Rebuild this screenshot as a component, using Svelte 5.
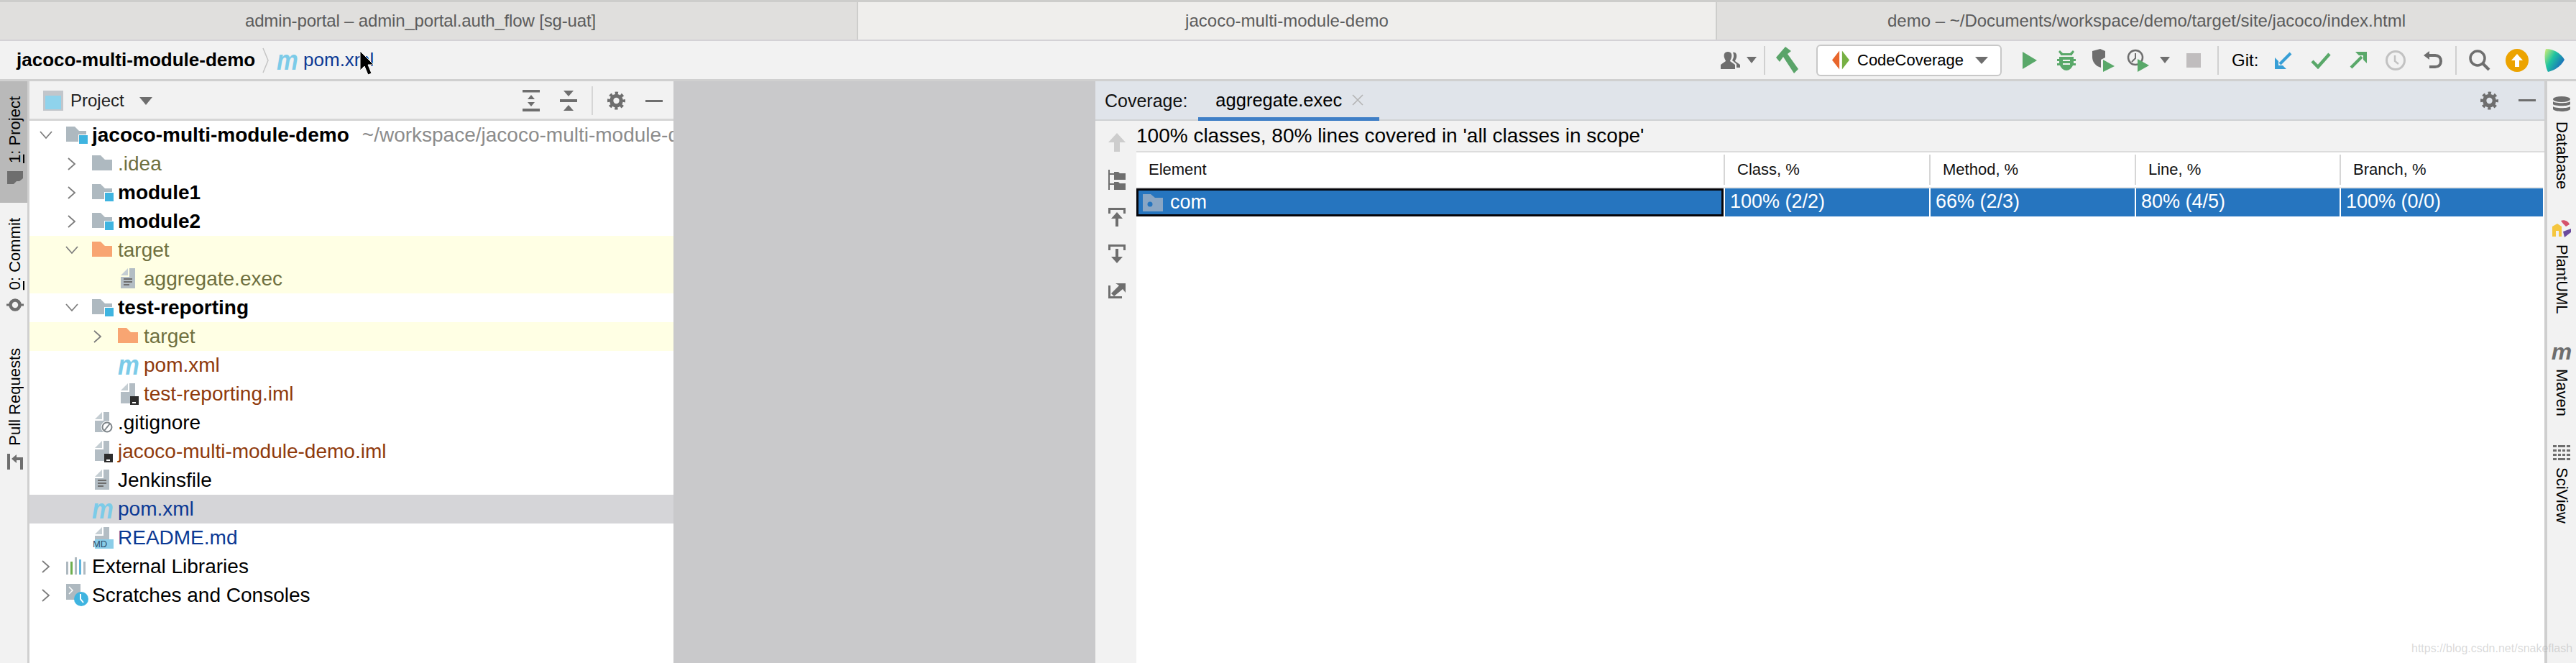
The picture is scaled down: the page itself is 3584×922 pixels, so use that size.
<script lang="ts">
/**
 * IDE window with project tree and coverage results.
 */

type Row = {
  depth: number;
  label: string;
  icon: string;
  arrow?: 'open' | 'closed';
  cls?: string;
  hint?: string;
  tint?: boolean;
  selected?: boolean;
};

const tabs = [
  { label: 'admin-portal – admin_portal.auth_flow [sg-uat]' },
  { label: 'jacoco-multi-module-demo', active: true },
  { label: 'demo – ~/Documents/workspace/demo/target/site/jacoco/index.html' }
];

const rows: Row[] = [
  { depth: 0, label: 'jacoco-multi-module-demo', icon: 'module', arrow: 'open', cls: 'bold', hint: '~/workspace/jacoco-multi-module-demo' },
  { depth: 1, label: '.idea', icon: 'folder', arrow: 'closed', cls: 'olive' },
  { depth: 1, label: 'module1', icon: 'module', arrow: 'closed', cls: 'bold' },
  { depth: 1, label: 'module2', icon: 'module', arrow: 'closed', cls: 'bold' },
  { depth: 1, label: 'target', icon: 'orange', arrow: 'open', cls: 'olive', tint: true },
  { depth: 2, label: 'aggregate.exec', icon: 'text', cls: 'olive', tint: true },
  { depth: 1, label: 'test-reporting', icon: 'module', arrow: 'open', cls: 'bold' },
  { depth: 2, label: 'target', icon: 'orange', arrow: 'closed', cls: 'olive', tint: true },
  { depth: 2, label: 'pom.xml', icon: 'maven', cls: 'rust' },
  { depth: 2, label: 'test-reporting.iml', icon: 'iml', cls: 'rust' },
  { depth: 1, label: '.gitignore', icon: 'ignore' },
  { depth: 1, label: 'jacoco-multi-module-demo.iml', icon: 'iml', cls: 'rust' },
  { depth: 1, label: 'Jenkinsfile', icon: 'text' },
  { depth: 1, label: 'pom.xml', icon: 'maven', cls: 'blue', selected: true },
  { depth: 1, label: 'README.md', icon: 'md', cls: 'blue' },
  { depth: 0, label: 'External Libraries', icon: 'libs', arrow: 'closed' },
  { depth: 0, label: 'Scratches and Consoles', icon: 'scratch', arrow: 'closed' }
];

const columns = ['Element', 'Class, %', 'Method, %', 'Line, %', 'Branch, %'];
const values = ['100% (2/2)', '66% (2/3)', '80% (4/5)', '100% (0/0)'];
</script>

{#snippet gear()}
  <svg class="gear" viewBox="0 0 24 24" width="25" height="26">
    <circle cx="12" cy="12" r="6.5" fill="none" stroke="#6e6e6e" stroke-width="5" />
    <circle cx="12" cy="12" r="10" fill="none" stroke="#6e6e6e" stroke-width="4" stroke-dasharray="4 3.85" stroke-dashoffset="2" />
  </svg>
{/snippet}

{#snippet treeIcon(kind: string)}
  {#if kind === 'module' || kind === 'folder' || kind === 'orange'}
    <svg viewBox="0 0 32 26" width="32" height="26" class="ic-folder">
      <path d="M0 1H12L18 7H28V22H0Z" fill={kind === 'orange' ? '#f8a572' : '#aeb9c0'} />
      {#if kind === 'module'}
        <rect x="17" y="12" width="14" height="14" fill="#fff" />
        <rect x="18" y="13" width="12" height="12" fill="#3fb4e0" />
      {/if}
    </svg>
  {:else if kind === 'maven'}
    <span class="m-icon">m</span>
  {:else if kind === 'libs'}
    <svg viewBox="0 0 30 26" width="30" height="26" class="ic-folder">
      <rect x="0" y="6" width="3" height="18" fill="#aeb9c0" />
      <rect x="6" y="6" width="3" height="18" fill="#6cae4f" />
      <rect x="12" y="0" width="3" height="24" fill="#aeb9c0" />
      <rect x="18" y="3" width="3" height="21" fill="#62b5dc" />
      <rect x="24" y="6" width="3" height="18" fill="#aeb9c0" />
    </svg>
  {:else if kind === 'scratch'}
    <svg viewBox="0 0 32 32" width="32" height="32" class="ic-folder">
      <path d="M0 0H20V12L12 22H0Z" fill="#aeb9c0" />
      <path d="M4 4L9 9L4 14" fill="none" stroke="#fff" stroke-width="1.5" />
      <circle cx="21" cy="21" r="10" fill="#3fb4e0" />
      <path d="M20 14V21L24 26" fill="none" stroke="#fff" stroke-width="2" />
    </svg>
  {:else}
    <svg viewBox="0 0 26 30" width="26" height="30" class="ic-file">
      <path d="M12 0H20V28H0V12H12Z" fill="#b3bdc4" />
      <path d="M0 10L10 0V10Z" fill="#c5ced3" />
      {#if kind === 'text'}
        <path d="M4 15H16M4 19H16M4 23H12" stroke="#6e6e6e" stroke-width="2" />
      {:else if kind === 'iml'}
        <rect x="13" y="18" width="12" height="12" fill="#2d2d2d" />
        <rect x="16" y="26" width="5" height="2" fill="#fff" />
      {:else if kind === 'ignore'}
        <circle cx="17" cy="21" r="8.5" fill="#fff" />
        <circle cx="17" cy="21" r="6.5" fill="none" stroke="#7d8489" stroke-width="2" />
        <path d="M13 26L21 16" stroke="#7d8489" stroke-width="2" />
      {:else if kind === 'md'}
        <rect x="-4" y="17" width="30" height="13" fill="#8bcde8" />
      {/if}
    </svg>
    {#if kind === 'md'}<span class="md-tag">MD</span>{/if}
  {/if}
{/snippet}

<div class="window">
  <div class="tabs">
    {#each tabs as tab}
      <div class="tab" class:active={tab.active}>{tab.label}</div>
    {/each}
  </div>

  <div class="navbar">
    <span class="crumb-root">jacoco-multi-module-demo</span>
    <svg class="crumb-sep" viewBox="0 0 10 36" width="10" height="36"><path d="M1 1L8 18L1 35" fill="none" stroke="#c4c4c4" stroke-width="1.5" /></svg>
    <span class="m-icon crumb-m">m</span>
    <span class="crumb-file">pom.xml</span>

    <div class="toolbar">
      <span class="slot w-person">
        <svg viewBox="0 0 28 24" width="28" height="24"><path d="M10 0C15 0 16 4 15 8C14 11 13 12 13 13L20 18V24H0V18L7 13C7 12 6 11 5 8C4 4 5 0 10 0Z" fill="#6e6e6e" /><path d="M17 1C21 0 23 4 22 8C21.500 10 20 12 20 13L27 18V22H22V17L16 12C18 9 19 5 17 1Z" fill="#6e6e6e" /></svg>
      </span>
      <span class="slot w-tri first-tri"><i class="tri"></i></span>
      <i class="sep sep-a"></i>
      <span class="slot w-hammer">
        <svg viewBox="0 0 32 38" width="32" height="38"><path d="M0 15L13 0L21 6L16 10L31 31L25 37L10 14L5 21Z" fill="#5aa469" /></svg>
      </span>
      <div class="combo">
        <svg viewBox="0 0 26 28" width="24" height="27"><path d="M11 0V28L0 14Z" fill="#e8662c" /><path d="M15 0V28L26 14Z" fill="#76b043" /></svg>
        <span class="combo-label">CodeCoverage</span>
        <i class="tri big"></i>
      </div>
      <span class="slot w-run">
        <svg viewBox="0 0 20 24" width="20" height="24"><path d="M0 0L20 12L0 24Z" fill="#59a869" /></svg>
      </span>
      <span class="slot w-52">
        <svg viewBox="0 0 26 28" width="26" height="28"><path d="M4 0L8 4H18L22 0L24 2L21 6V7H5V6L2 2ZM3 9H23V12H26V15H23V18H26V21H22C20 25 17 28 13 28C9 28 6 25 4 21H0V18H3V15H0V12H3ZM8 13V15H18V13ZM8 18V20H18V18Z" fill="#59a869" /></svg>
      </span>
      <span class="slot w-52">
        <svg viewBox="0 0 32 32" width="32" height="32"><path d="M0 3L11 0L18 3V12L12 15V26L7 24C2 20 0 16 0 11Z" fill="#6e6e6e" /><path d="M15 15L31 24L15 32Z" fill="#59a869" /></svg>
      </span>
      <span class="slot w-clock">
        <svg viewBox="0 0 32 32" width="32" height="32"><circle cx="12" cy="12" r="10" fill="none" stroke="#6e6e6e" stroke-width="2.500" /><path d="M12 6V13L7 18" fill="none" stroke="#6e6e6e" stroke-width="2" /><path d="M15 14L31 23L15 32Z" fill="#59a869" /></svg>
      </span>
      <span class="slot w-tri"><i class="tri"></i></span>
      <span class="slot w-stop"><i class="stop"></i></span>
      <i class="sep sep-b"></i>
      <span class="git">Git:</span>
      <span class="slot w-52">
        <svg viewBox="0 0 24 24" width="24" height="24"><path d="M22 2L7 17" stroke="#389fd6" stroke-width="4" /><path d="M0 8L0 24H16L11 19H5V13Z" fill="#389fd6" /></svg>
      </span>
      <span class="slot w-52">
        <svg viewBox="0 0 28 24" width="28" height="24"><path d="M2 13L10 21L26 3" fill="none" stroke="#59a869" stroke-width="4.500" /></svg>
      </span>
      <span class="slot w-52">
        <svg viewBox="0 0 24 24" width="24" height="24"><path d="M2 22L17 7" stroke="#59a869" stroke-width="4" /><path d="M8 0H24V16L19 11V5H13Z" fill="#59a869" /></svg>
      </span>
      <span class="slot w-52">
        <svg viewBox="0 0 28 28" width="28" height="28"><circle cx="14" cy="14" r="12.500" fill="none" stroke="#c2c2c2" stroke-width="3" /><path d="M13 7V15L18 19" fill="none" stroke="#c2c2c2" stroke-width="2.500" /></svg>
      </span>
      <span class="slot w-52">
        <svg viewBox="0 0 26 26" width="26" height="26"><path d="M7 6H16C21 6 24 9 24 14C24 19 21 22 16 22H8" fill="none" stroke="#6e6e6e" stroke-width="4" /><path d="M0 6L8 0V12Z" fill="#6e6e6e" /></svg>
      </span>
      <i class="sep sep-c"></i>
      <span class="slot w-52">
        <svg viewBox="0 0 30 30" width="30" height="30"><circle cx="12" cy="12" r="10" fill="none" stroke="#6e6e6e" stroke-width="3.500" /><path d="M19 19L28 28" stroke="#6e6e6e" stroke-width="4" /></svg>
      </span>
      <span class="slot w-52">
        <svg viewBox="0 0 32 32" width="32" height="32"><circle cx="16" cy="16" r="16" fill="#eca300" /><path d="M16 7L24 16H19V25H13V16H8Z" fill="#fff" /></svg>
      </span>
      <span class="slot w-52">
        <svg viewBox="0 0 30 32" width="30" height="32">
          <defs><linearGradient id="toolbox" x1="0" y1="0" x2="1" y2="0.700"><stop offset="0" stop-color="#d8ee74" /><stop offset="0.450" stop-color="#1fc3a0" /><stop offset="1" stop-color="#1a5fc0" /></linearGradient></defs>
          <path d="M3 0C14 0 24 6 29 15C25 23 16 30 6 32C2 25 0 8 3 0Z" fill="url(#toolbox)" />
        </svg>
      </span>
    </div>
  </div>

  <div class="body">
    <div class="strip left">
      <div class="strip-btn active">
        <span class="strip-label"><u>1</u>: Project</span>
        <svg viewBox="0 0 22 18" width="22" height="18"><path d="M0 18V0H22V10L17 14H13L9 18Z" fill="#6e6e6e" /></svg>
      </div>
      <div class="strip-btn commit">
        <span class="strip-label"><u>0</u>: Commit</span>
        <svg viewBox="0 0 24 24" width="24" height="24"><circle cx="12" cy="12" r="6.500" fill="none" stroke="#6e6e6e" stroke-width="4.500" /><path d="M0 12H6M18 12H24" stroke="#6e6e6e" stroke-width="3" /></svg>
      </div>
      <div class="strip-btn pull">
        <span class="strip-label">Pull Requests</span>
        <svg viewBox="0 0 22 22" width="22" height="22"><path d="M0 0H4V22H0ZM6 7L13 1V5H22V22H18V9H13V13Z" fill="#6e6e6e" /></svg>
      </div>
    </div>

    <section class="project">
      <header class="project-head">
        <svg viewBox="0 0 28 28" width="28" height="28" class="pane-ic"><rect width="28" height="28" fill="#c2c6cb" /><rect x="3" y="7" width="22" height="19" fill="#8fd3ec" /></svg>
        <span class="project-title">Project</span>
        <i class="tri head-tri"></i>
        <span class="head-tools">
          <svg viewBox="0 0 24 30" width="24" height="30"><path d="M0 0H24V3.500H0ZM0 26H24V30H0ZM12 7L17 13H7ZM7 17H17L12 23Z" fill="#6e6e6e" /></svg>
          <svg viewBox="0 0 24 30" width="24" height="30" class="collapse"><path d="M0 13H24V17H0ZM5 1H19L12 9ZM12 21L19 29H5Z" fill="#6e6e6e" /></svg>
          <i class="head-sep"></i>
          {@render gear()}
          <i class="minus"></i>
        </span>
      </header>
      <div class="tree">
        {#each rows as row}
          <div class="row" class:tint={row.tint} class:selected={row.selected} style={`padding-left:${row.depth * 36}px`}>
            <span class="arrow">
              {#if row.arrow === 'open'}
                <svg viewBox="0 0 18 12" width="18" height="12"><path d="M1 1L9 10L17 1" fill="none" stroke="#7d7d7d" stroke-width="1.800" /></svg>
              {:else if row.arrow === 'closed'}
                <svg viewBox="0 0 12 18" width="12" height="18"><path d="M1 1L10 9L1 17" fill="none" stroke="#7d7d7d" stroke-width="1.800" /></svg>
              {/if}
            </span>
            <span class="icon">{@render treeIcon(row.icon)}</span>
            <span class={`name ${row.cls ?? ''}`}>{row.label}</span>
            {#if row.hint}<span class="hint">{row.hint}</span>{/if}
          </div>
        {/each}
      </div>
    </section>

    <div class="editor"></div>

    <section class="coverage">
      <header class="cov-head">
        <span class="cov-title">Coverage:</span>
        <div class="cov-tab">
          <span>aggregate.exec</span>
          <svg viewBox="0 0 16 16" width="16" height="16"><path d="M1 1L15 15M15 1L1 15" stroke="#b4b4b4" stroke-width="1.600" /></svg>
        </div>
        <span class="cov-tools">
          {@render gear()}
          <i class="minus"></i>
        </span>
      </header>
      <div class="cov-body">
        <div class="gutter">
          <svg viewBox="0 0 24 26" width="24" height="26"><path d="M12 0L24 13H16V26H8V13H0Z" fill="#cdcdcd" /></svg>
          <svg viewBox="0 0 24 28" width="24" height="28"><path d="M0 0H2V28H0ZM2 5H8V3H14L16 5H24V14H8V7H2ZM2 19H8V17H14L16 19H24V28H8V21H2Z" fill="#6e6e6e" /></svg>
          <svg viewBox="0 0 24 26" width="24" height="26"><path d="M0 0H24V8H21V3H3V8H0ZM12 6L20 15H14V26H10V15H4Z" fill="#6e6e6e" /></svg>
          <svg viewBox="0 0 24 26" width="24" height="26"><path d="M0 0H24V8H21V3H3V8H0ZM10 6H14V17H20L12 26L4 17H10Z" fill="#6e6e6e" /></svg>
          <svg viewBox="0 0 24 24" width="24" height="24"><path d="M0 6H3V21H19V24H0ZM4 17L15 6L10 3H24V16L20 11L8 21Z" fill="#6e6e6e" /></svg>
        </div>
        <div class="results">
          <div class="summary">100% classes, 80% lines covered in 'all classes in scope'</div>
          <div class="table">
            <div class="tr head">
              {#each columns as col}
                <div class="th">{col}</div>
              {/each}
            </div>
            <div class="tr pick">
              <div class="td first">
                <svg viewBox="0 0 28 24" width="28" height="24"><path d="M0 0H11L17 5H28V24H0Z" fill="#8aa6c4" /><circle cx="10" cy="14" r="3.500" fill="#2675bf" /></svg>
                <span>com</span>
              </div>
              {#each values as value}
                <div class="td">{value}</div>
              {/each}
            </div>
          </div>
        </div>
      </div>
    </section>

    <div class="strip right">
      <div class="side-btn db">
        <svg viewBox="0 0 24 24" width="24" height="24"><ellipse cx="12" cy="4" rx="12" ry="4" fill="#6e6e6e" /><path d="M0 7C3 10 21 10 24 7V11C21 14 3 14 0 11ZM0 14C3 17 21 17 24 14V18C21 22 3 22 0 18Z" fill="#6e6e6e" /></svg>
        <span>Database</span>
      </div>
      <div class="side-btn uml">
        <svg viewBox="0 0 26 26" width="26" height="26"><path d="M0 10L7 6L13 10V24H9V16H5V24H0Z" fill="#f5c63f" /><path d="M12 2C16 0 22 2 24 7L19 10L15 6Z" fill="#d5526b" /><path d="M15 17L26 13V18L17 25Z" fill="#6b4a9e" /></svg>
        <span>PlantUML</span>
      </div>
      <div class="side-btn mvn">
        <span class="m-icon gray">m</span>
        <span>Maven</span>
      </div>
      <div class="side-btn sci">
        <svg viewBox="0 0 24 22" width="24" height="22"><path d="M0 0H5V3H0ZM7 0H17V3H7ZM19 0H24V3H19ZM0 6H5V9H0ZM7 6H11V9H7ZM13 6H17V9H13ZM19 6H24V9H19ZM0 12H5V15H0ZM7 12H11V15H7ZM13 12H17V15H13ZM19 12H24V15H19ZM0 18H5V21H0ZM7 18H17V21H7ZM19 18H24V21H19Z" fill="#6e6e6e" /></svg>
        <span>SciView</span>
      </div>
    </div>
  </div>

  <svg class="cursor" viewBox="0 0 20 36" width="20" height="36"><path d="M1 1V28L7 22L12 34L17 32L12 20H20Z" fill="#000" stroke="#fff" stroke-width="1" /></svg>
  <div class="watermark">https://blog.csdn.net/snakeflash</div>
</div>

<style>
  :global(body) {
    margin: 0;
    background: #fff;
  }

  .window {
    position: relative;
    display: flex;
    flex-direction: column;
    height: 922px;
    overflow: hidden;
    font-family: 'Liberation Sans', Arial, sans-serif;
    color: #000;
  }

  .tabs {
    display: grid;
    grid-template-columns: 1194px 1195px 1fr;
    height: 57px;
    flex: none;
    box-sizing: border-box;
    border-top: 3px solid #cdcdcb;
    border-bottom: 2px solid #d4d2d6;
    background: #e0dfdd;
  }

  .tab {
    display: flex;
    align-items: center;
    justify-content: center;
    box-sizing: border-box;
    border-right: 2px solid #cdcdcb;
    font-size: 24px;
    color: #5c5c5c;
  }

  .tab:first-child {
    padding-right: 22px;
    letter-spacing: -0.15px;
  }

  .tab:last-child {
    border-right: 0;
  }

  .tab.active {
    background: #efeeec;
  }

  .navbar {
    display: flex;
    align-items: center;
    flex: none;
    height: 56px;
    box-sizing: border-box;
    padding-left: 23px;
    border-bottom: 3px solid #d0d0d0;
    background: #f2f2f2;
  }

  .crumb-root {
    font-size: 26px;
    font-weight: 700;
  }

  .crumb-sep {
    margin: 0 10px;
  }

  .m-icon {
    display: inline-block;
    font-size: 38px;
    line-height: 30px;
    font-weight: 700;
    font-style: italic;
    color: #7ccbe8;
    transform: scaleX(0.88);
    transform-origin: left center;
  }

  .m-icon.gray {
    color: #6e6e6e;
    font-size: 32px;
    line-height: 22px;
    margin-right: 0;
    transform: none;
  }

  .crumb-m {
    margin-right: -4px;
  }

  .crumb-file {
    margin-left: 7px;
    font-size: 26px;
    color: #0b3994;
  }

  .toolbar {
    display: flex;
    align-items: center;
    margin-left: auto;
    padding-right: 4px;
  }

  .slot {
    display: flex;
    align-items: center;
    justify-content: center;
    flex: none;
  }

  .w-person { width: 40px; }
  .w-tri { width: 30px; }
  .first-tri { width: 18px; }
  .w-hammer { width: 44px; }
  .w-run { width: 50px; margin-left: 14px; }
  .w-52 { width: 52px; }
  .w-clock { width: 44px; }
  .w-stop { width: 50px; }

  .tri {
    display: block;
    width: 0;
    height: 0;
    border-left: 7.5px solid transparent;
    border-right: 7.5px solid transparent;
    border-top: 9px solid #6e6e6e;
  }

  .tri.big {
    border-left-width: 9px;
    border-right-width: 9px;
    border-top-width: 10px;
  }

  .sep {
    display: block;
    flex: none;
    width: 2px;
    height: 40px;
    background: #d0d0d0;
  }

  .sep-a { margin: 0 9px 0 8px; }
  .sep-b { margin: 0 18px 0 8px; }
  .sep-c { margin: 0 6px 0 5px; }

  .stop {
    display: block;
    width: 20px;
    height: 20px;
    background: #c0bdbe;
  }

  .combo {
    display: flex;
    align-items: center;
    flex: none;
    width: 258px;
    height: 44px;
    margin-left: 18px;
    box-sizing: border-box;
    padding: 0 17px 0 20px;
    border: 2px solid #c8c8c8;
    border-radius: 6px;
    background: #fff;
  }

  .combo-label {
    margin-left: 11px;
    font-size: 22px;
  }

  .combo .tri {
    margin-left: auto;
  }

  .git {
    width: 46px;
    flex: none;
    font-size: 24px;
  }

  .body {
    display: flex;
    flex: 1;
    min-height: 0;
  }

  .strip {
    display: flex;
    flex-direction: column;
    flex: none;
    background: #f2f2f2;
  }

  .strip.left {
    width: 38px;
    border-right: 3px solid #d0d0d0;
  }

  .strip-btn {
    display: flex;
    flex-direction: column;
    align-items: center;
    padding-left: 3px;
    font-size: 22px;
    white-space: nowrap;
  }

  .strip-label {
    writing-mode: vertical-rl;
    transform: rotate(180deg);
  }

  .strip-btn.active {
    height: 169px;
    box-sizing: border-box;
    gap: 11px;
    padding-top: 21px;
    background: #b9b9b9;
  }

  .strip-btn.commit {
    margin-top: 21px;
    gap: 9px;
  }

  .strip-btn.pull {
    margin-top: 48px;
    gap: 11px;
  }

  .strip.right {
    width: 40px;
    border-left: 4px solid #cfcfcf;
  }

  .side-btn {
    display: flex;
    flex-direction: column;
    align-items: center;
    gap: 10px;
    font-size: 22px;
  }

  .side-btn span:last-child {
    writing-mode: vertical-rl;
  }

  .side-btn.db { margin-top: 21px; gap: 11px; }
  .side-btn.uml { margin-top: 42px; gap: 9px; }
  .side-btn.mvn { margin-top: 41px; gap: 13px; }
  .side-btn.sci { margin-top: 40px; gap: 9px; }

  .project {
    display: flex;
    flex-direction: column;
    flex: none;
    width: 896px;
    background: #fff;
  }

  .project-head {
    display: flex;
    align-items: center;
    flex: none;
    height: 55px;
    box-sizing: border-box;
    padding: 2px 0 0 19px;
    border-bottom: 3px solid #d6d6d6;
    background: #f2f2f2;
  }

  .project-title {
    margin-left: 10px;
    font-size: 24px;
    color: #222;
  }

  .head-tri {
    margin-left: 21px;
    border-left-width: 9px;
    border-right-width: 9px;
    border-top-width: 11px;
  }

  .head-tools {
    display: flex;
    align-items: center;
    margin-left: auto;
    padding-right: 15px;
  }

  .collapse {
    margin-left: 28px;
  }

  .head-sep {
    width: 2px;
    height: 40px;
    margin: 0 20px;
    background: #d6d6d6;
  }

  .minus {
    display: block;
    width: 24px;
    height: 3px;
    margin-left: 28px;
    background: #6e6e6e;
  }

  .tree {
    flex: 1;
    overflow: hidden;
  }

  .row {
    display: flex;
    align-items: center;
    height: 40px;
    white-space: nowrap;
    overflow: hidden;
    font-size: 28px;
  }

  .row.tint {
    background: #ffffe4;
  }

  .row.selected {
    background: #d5d5d8;
  }

  .arrow {
    display: flex;
    justify-content: center;
    flex: none;
    width: 46px;
  }

  .icon {
    position: relative;
    display: flex;
    align-items: center;
    flex: none;
    width: 41px;
    height: 32px;
    padding-left: 5px;
    box-sizing: border-box;
  }

  .ic-file {
    margin-left: 4px;
  }

  .md-tag {
    position: absolute;
    left: 6px;
    bottom: 1px;
    font-size: 13px;
    line-height: 13px;
    color: #2d4d6b;
  }

  .name.bold {
    font-weight: 700;
  }

  .name.olive { color: #6f7040; }
  .name.rust { color: #8f3a0c; }
  .name.blue { color: #0b3994; }

  .hint {
    margin-left: 18px;
    color: #8c8c8c;
  }

  .editor {
    flex: none;
    width: 587px;
    background: #c9c9cb;
  }

  .coverage {
    display: flex;
    flex-direction: column;
    flex: 1;
    min-width: 0;
    background: #fff;
  }

  .cov-head {
    display: flex;
    align-items: stretch;
    flex: none;
    height: 55px;
    box-sizing: border-box;
    padding-left: 13px;
    border-bottom: 2px solid #d0d2d4;
    background: #e0e4ea;
  }

  .cov-title {
    align-self: center;
    margin-top: 2px;
    font-size: 25px;
    color: #111;
  }

  .cov-tab {
    display: flex;
    align-items: center;
    gap: 14px;
    margin-left: 15px;
    padding: 2px 22px 0 24px;
    border-bottom: 5px solid #3f7fc6;
    margin-bottom: -2px;
    font-size: 25.5px;
  }

  .cov-tools {
    display: flex;
    align-items: center;
    margin-left: auto;
    padding-right: 12px;
  }

  .cov-body {
    display: flex;
    flex: 1;
    min-height: 0;
  }

  .gutter {
    display: flex;
    flex-direction: column;
    align-items: center;
    flex: none;
    width: 57px;
    box-sizing: border-box;
    padding: 17px 0 0 2px;
    gap: 25px;
    background: #f2f2f2;
  }

  .results {
    display: flex;
    flex-direction: column;
    flex: 1;
    min-width: 0;
  }

  .summary {
    display: flex;
    align-items: center;
    flex: none;
    height: 42px;
    font-size: 28px;
    background: #f2f2f2;
    border-bottom: 2px solid #dcdcdc;
  }

  .table {
    flex: 1;
    padding-right: 2px;
  }

  .tr {
    display: grid;
    grid-template-columns: 819px 286px 286px 285px 1fr;
  }

  .tr.head {
    height: 50px;
    box-sizing: border-box;
    border-bottom: 2px solid #e8e8e8;
  }

  .th {
    display: flex;
    align-items: center;
    margin: 3px 0;
    padding-left: 17px;
    border-right: 2px solid #d6d6d6;
    font-size: 22px;
    color: #111;
  }

  .th:last-child {
    border-right: 0;
  }

  .tr.pick {
    height: 39px;
    background: #2675bf;
    color: #fff;
  }

  .td {
    display: flex;
    align-items: center;
    padding-left: 7px;
    padding-bottom: 2px;
    border-right: 2px solid #fff;
    font-size: 27px;
  }

  .td:last-child {
    border-right: 0;
  }

  .td.first {
    gap: 10px;
    box-sizing: border-box;
    padding-left: 6px;
    padding-bottom: 0;
    border: 3px solid #05050a;
    box-shadow: 2px 0 0 #fff;
    margin-right: 2px;
  }

  .cursor {
    position: absolute;
    left: 500px;
    top: 70px;
  }

  .watermark {
    position: absolute;
    left: 3355px;
    top: 893px;
    font-size: 16px;
    color: rgba(170, 170, 170, 0.45);
    white-space: nowrap;
  }
</style>
